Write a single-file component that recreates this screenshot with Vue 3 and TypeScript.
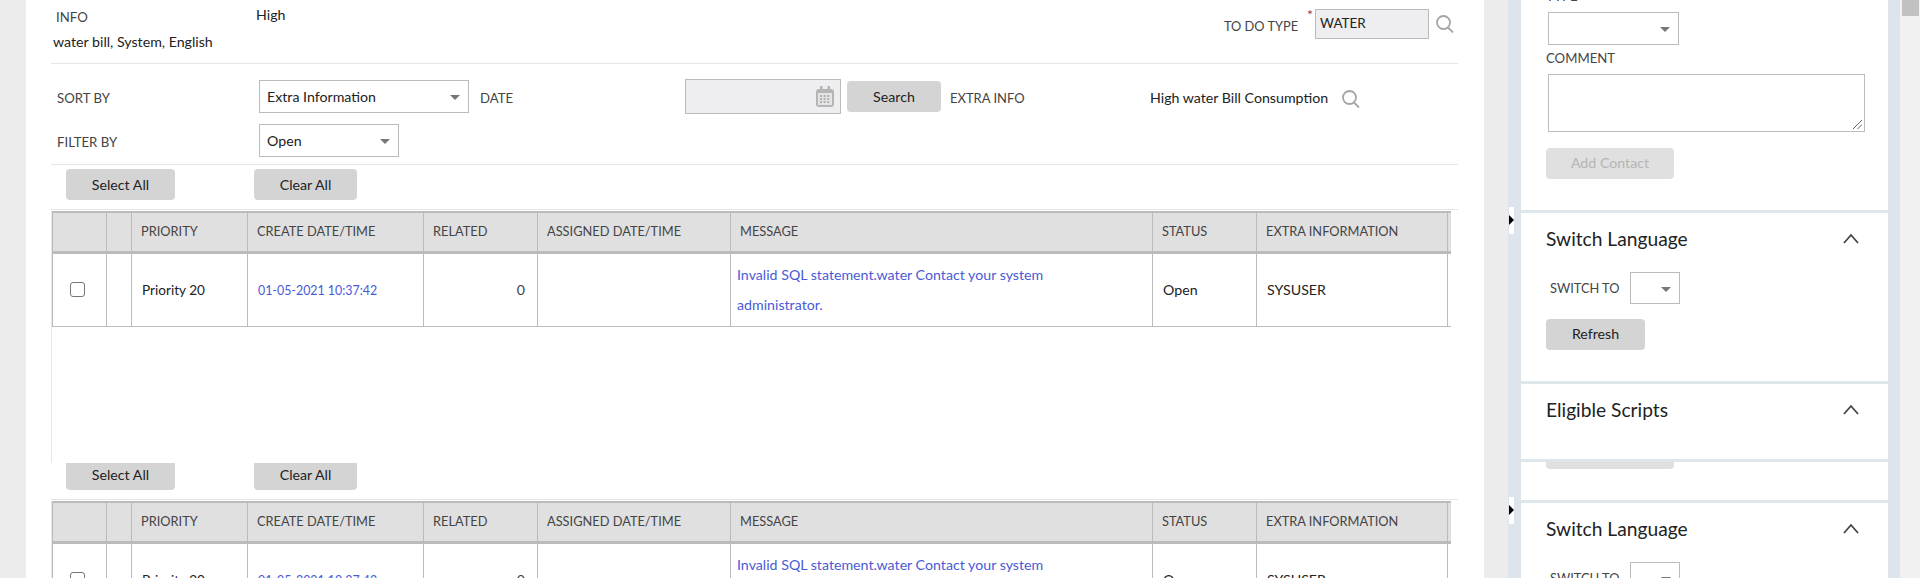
<template>
  <div class="page">
    <main class="main">
      <header class="top-row">
        <div class="info-col">
          <span class="label info-label">INFO</span>
          <span class="value info-value">water bill, System, English</span>
        </div>
        <span class="value high">High</span>
        <div class="todo">
          <span class="label">TO DO TYPE</span>
          <span class="required">*</span>
          <div class="input readonly todo-input">WATER</div>
          <svg class="search-icon" viewBox="0 0 18 18"><circle cx="7.5" cy="7.5" r="6.5" /><path d="M12 12.5l5 5" /></svg>
        </div>
      </header>

      <section class="filters">
        <div class="filter-row">
          <span class="label filter-label">SORT BY</span>
          <div class="select sort-select">Extra Information<i class="caret"></i></div>
          <span class="label date-label">DATE</span>
          <div class="input readonly date-input">
            <svg class="cal-icon" viewBox="0 0 18 21">
              <rect x="0" y="3" width="18" height="18" rx="3" fill="#b5b5b5" />
              <rect x="4" y="0" width="2.5" height="5" fill="#b5b5b5" />
              <rect x="11.5" y="0" width="2.5" height="5" fill="#b5b5b5" />
              <rect x="2" y="7" width="14" height="12" fill="#e4e4e6" />
              <path d="M4 10h10M4 13h10M4 16h10" stroke="#a0a0a0" stroke-width="1.6" stroke-dasharray="2 1.6" />
            </svg>
          </div>
          <button class="btn search-btn">Search</button>
          <span class="label extra-label">EXTRA INFO</span>
          <span class="value extra-value">High water Bill Consumption</span>
          <svg class="search-icon extra-search" viewBox="0 0 18 18"><circle cx="7.5" cy="7.5" r="6.5" /><path d="M12 12.5l5 5" /></svg>
        </div>
        <div class="filter-row second">
          <span class="label filter-label">FILTER BY</span>
          <div class="select filter-select">Open<i class="caret"></i></div>
        </div>
      </section>

      <section v-for="n in 2" :key="n" class="todo-list">
        <div class="toolbar">
          <button class="btn select-all">Select All</button>
          <button class="btn clear-all">Clear All</button>
        </div>
        <div class="table-wrap">
          <table class="grid">
            <colgroup>
              <col v-for="(w, i) in colWidths" :key="i" :style="{ width: w + 'px' }" />
            </colgroup>
            <thead>
              <tr>
                <th></th>
                <th></th>
                <th v-for="h in headers" :key="h">{{ h }}</th>
                <th></th>
              </tr>
            </thead>
            <tbody>
              <tr>
                <td class="check-cell"><span class="check"></span></td>
                <td></td>
                <td class="priority">Priority 20</td>
                <td><a class="link date-link">01-05-2021 10:37:42</a></td>
                <td class="num">0</td>
                <td></td>
                <td class="msg"><a class="link">Invalid SQL statement.water Contact your system administrator.</a></td>
                <td>Open</td>
                <td>SYSUSER</td>
                <td></td>
              </tr>
            </tbody>
          </table>
        </div>
      </section>
    </main>

    <aside class="side">
      <i class="handle first"></i>
      <i class="handle second"></i>
      <div class="side-inner">
        <template v-for="n in 2" :key="n">
          <div class="panel contact" :class="{ clipped: n === 2 }">
            <template v-if="n === 1">
              <span class="label type-label">TYPE</span>
              <div class="select type-select"><i class="caret"></i></div>
              <span class="label comment-label">COMMENT</span>
              <div class="textarea">
                <svg class="grip" viewBox="0 0 10 10"><path d="M0 10L10 0M5 10l5-5" /></svg>
              </div>
            </template>
            <button class="btn add-contact">Add Contact</button>
          </div>
          <div class="panel lang">
            <div class="panel-head">
              <h3>Switch Language</h3>
              <svg class="chevron" viewBox="0 0 16 11"><path d="M1 10l7-8 7 8" /></svg>
            </div>
            <div class="switch-row">
              <span class="label">SWITCH TO</span>
              <div class="select switch-select"><i class="caret"></i></div>
            </div>
            <button class="btn refresh">Refresh</button>
          </div>
          <div v-if="n === 1" class="panel scripts">
            <div class="panel-head">
              <h3>Eligible Scripts</h3>
              <svg class="chevron" viewBox="0 0 16 11"><path d="M1 10l7-8 7 8" /></svg>
            </div>
          </div>
        </template>
      </div>
    </aside>

    <div class="scrollbar"><div class="thumb"></div></div>
  </div>
</template>

<script setup lang="ts">
const colWidths: number[] = [54, 25, 116, 176, 114, 193, 422, 104, 191, 120]
const headers: string[] = [
  'PRIORITY',
  'CREATE DATE/TIME',
  'RELATED',
  'ASSIGNED DATE/TIME',
  'MESSAGE',
  'STATUS',
  'EXTRA INFORMATION',
]
</script>

<style>
html,
body {
  margin: 0;
  overflow: hidden;
}
</style>

<style scoped>
.page {
  display: flex;
  width: 1920px;
  height: 578px;
  overflow: hidden;
  background: #ececec;
  font-family: Lato, 'Open Sans', sans-serif;
  font-size: 14.2px;
  color: #222;
}

.main {
  box-sizing: border-box;
  flex: none;
  width: 1458px;
  height: 578px;
  margin: 0 24px 0 26px;
  padding: 0 26px 0 25px;
  background: #fff;
  overflow: hidden;
}

.label {
  color: #444;
  font-size: 13.2px;
}

.value {
  color: #222;
}

.top-row {
  display: flex;
  height: 63px;
  border-bottom: 1px solid #e6e6e6;
}

.info-col {
  display: flex;
  flex-direction: column;
  width: 205px;
  padding-top: 9px;
}

.info-label {
  padding-left: 5px;
  line-height: 17px;
}

.info-value {
  padding-left: 2px;
  margin-top: 7px;
  line-height: 17px;
}

.high {
  padding-top: 6px;
  line-height: 17px;
}

.todo {
  display: flex;
  margin-left: auto;
  padding-top: 9px;
  align-items: flex-start;
}

.todo > .label {
  margin-top: 8px;
  line-height: 18px;
  font-size: 12.8px;
}

.required {
  margin: -3px 2px 0 9px;
  color: #a33;
  font-size: 14px;
}

.input,
.select,
.textarea {
  box-sizing: border-box;
  border: 1px solid #bbb;
}

.readonly {
  background: #eeeef0;
}

.todo-input {
  width: 114px;
  height: 30px;
  padding-left: 4px;
  line-height: 27px;
  font-size: 13.5px;
  color: #222;
}

.search-icon {
  flex: none;
  width: 18px;
  height: 18px;
  fill: none;
  stroke: #a5a5a5;
  stroke-width: 1.8;
}

.todo .search-icon {
  margin: 6px 4px 0 7px;
}

.filters {
  height: 100px;
  border-bottom: 1px solid #e6e6e6;
}

.filter-row {
  display: flex;
  align-items: flex-start;
  height: 44px;
  padding-top: 16px;
}

.filter-row.second {
  height: 33px;
  padding-top: 0;
}

.filter-label {
  width: 202px;
  padding: 10px 0 0 6px;
  line-height: 17px;
}

.select {
  position: relative;
  height: 33px;
  padding-left: 7px;
  line-height: 31px;
  color: #222;
  background: #fff;
}

.caret {
  position: absolute;
  top: 14px;
  right: 8px;
  border-style: solid;
  border-width: 5px 5px 0;
  border-color: #777 transparent transparent;
}

.sort-select {
  width: 210px;
}

.filter-select {
  width: 140px;
}

.date-label {
  flex: none;
  width: 216px;
  padding: 10px 0 0 11px;
  line-height: 17px;
  box-sizing: border-box;
}

.date-input {
  position: relative;
  flex: none;
  width: 156px;
  height: 35px;
  margin-top: -1px;
}

.cal-icon {
  position: absolute;
  top: 6px;
  right: 6px;
  width: 18px;
  height: 21px;
}

.btn {
  box-sizing: border-box;
  padding: 0;
  border: 0;
  border-radius: 4px;
  background: #d4d4d4;
  color: #222;
  font: inherit;
  text-align: center;
}

.search-btn {
  flex: none;
  width: 94px;
  height: 31px;
  margin: 1px 0 0 6px;
}

.extra-label {
  flex: none;
  width: 209px;
  padding: 10px 0 0 9px;
  line-height: 17px;
  box-sizing: border-box;
  font-size: 13px;
}

.extra-value {
  flex: none;
  width: 192px;
  padding-top: 9px;
  line-height: 17px;
}

.extra-search {
  margin-top: 10px;
}

.toolbar {
  display: flex;
  height: 45px;
  box-sizing: border-box;
  padding: 4px 0 0 15px;
  border-bottom: 1px solid #e6e6e6;
}

.toolbar .btn {
  height: 31px;
}

.select-all {
  width: 109px;
}

.clear-all {
  width: 103px;
  margin-left: 79px;
}

/* table scroller lies over the top of the next toolbar */
.table-wrap {
  position: relative;
  z-index: 1;
  box-sizing: border-box;
  width: 1400px;
  height: 252px;
  margin: 1px 0 -8px;
  padding-left: 1px;
  background: #fff;
  border-left: 1px solid #e6e6e6;
  overflow: hidden;
}

.grid {
  width: 1515px;
  margin-left: -1px;
  border-collapse: collapse;
  table-layout: fixed;
}

.grid th,
.grid td {
  box-sizing: border-box;
  padding: 0 9px;
  border: 1px solid #bbb;
  text-align: left;
  font-weight: 400;
}

.grid th {
  height: 40px;
  padding-bottom: 1px;
  background: #e0e0e0;
  border-top-width: 2px;
  border-bottom-width: 3px;
  color: #444;
  font-size: 12.8px;
}

.grid td {
  height: 74px;
  padding-left: 10px;
  color: #222;
}

.grid .priority {
  font-size: 13.6px;
}

.grid .num {
  text-align: right;
  color: #444;
  padding-right: 12px;
}

.grid .msg {
  padding-left: 6px;
  line-height: 30px;
}

.grid .msg .link {
  display: block;
  max-width: 330px;
}

.link {
  color: #4a5ad6;
}

.date-link {
  font-size: 12.4px;
}

.check-cell {
  padding-left: 0 !important;
  padding-right: 15px !important;
}

.check {
  box-sizing: border-box;
  display: block;
  width: 15px;
  height: 15px;
  margin-left: 17px;
  border: 1.5px solid #767676;
  border-radius: 3px;
  background: #fff;
}

.side {
  position: relative;
  box-sizing: border-box;
  flex: none;
  width: 392px;
  height: 578px;
  padding: 0 12px 0 13px;
  background: #dde4ec;
  overflow: hidden;
}

.side-inner {
  margin-top: -10px;
}

.handle {
  position: absolute;
  left: 1px;
  width: 5px;
  height: 27px;
  background: #fff;
}

.handle::after {
  content: '';
  position: absolute;
  top: 8px;
  left: 0;
  border-style: solid;
  border-width: 5px 0 5px 5px;
  border-color: transparent transparent transparent #000;
}

.handle.first {
  top: 207px;
}

.handle.second {
  top: 497px;
}

.panel {
  box-sizing: border-box;
  background: #fff;
  border-bottom: 3px solid #dde6ea;
  padding-left: 25px;
}

.contact {
  height: 223px;
}

.contact.clipped {
  display: flex;
  flex-direction: column;
  justify-content: flex-end;
  height: 41px;
  padding-bottom: 31px;
  overflow: hidden;
}

.contact.clipped .add-contact {
  flex: none;
  margin-top: 0;
}

.type-label {
  display: block;
  height: 22px;
  line-height: 12px;
}

.type-select {
  width: 131px;
  margin-left: 2px;
}

.comment-label {
  display: block;
  margin-top: 5px;
  line-height: 17px;
}

.textarea {
  position: relative;
  width: 317px;
  height: 58px;
  margin: 7px 0 0 2px;
}

.grip {
  position: absolute;
  right: 2px;
  bottom: 2px;
  width: 9px;
  height: 9px;
  fill: none;
  stroke: #555;
  stroke-width: 1;
}

.add-contact {
  display: block;
  width: 128px;
  height: 31px;
  margin-top: 16px;
  padding-bottom: 2px;
  background: #e0e0e0;
  color: #b5b5b5;
}

.lang {
  height: 171px;
}

.panel-head {
  display: flex;
  justify-content: space-between;
  align-items: center;
  height: 50px;
  padding-right: 29px;
}

.panel-head h3 {
  margin: 0;
  font-size: 19.2px;
  font-weight: 400;
  color: #222;
}

.chevron {
  width: 16px;
  height: 11px;
  fill: none;
  stroke: #444;
  stroke-width: 1.8;
}

.switch-row {
  display: flex;
  align-items: flex-start;
  padding: 9px 0 0 4px;
}

.switch-row .label {
  width: 80px;
  padding-top: 8px;
  line-height: 17px;
  font-size: 12.8px;
}

.switch-select {
  width: 50px;
  height: 32px;
}

.refresh {
  display: block;
  width: 99px;
  height: 31px;
  margin-top: 15px;
  padding-bottom: 2px;
}

.scripts {
  height: 78px;
}

.scrollbar {
  flex: 1;
  background: #f1f1f1;
}

.thumb {
  width: 17px;
  height: 16px;
  margin-left: 2px;
  background: #c1c1c1;
}
</style>
